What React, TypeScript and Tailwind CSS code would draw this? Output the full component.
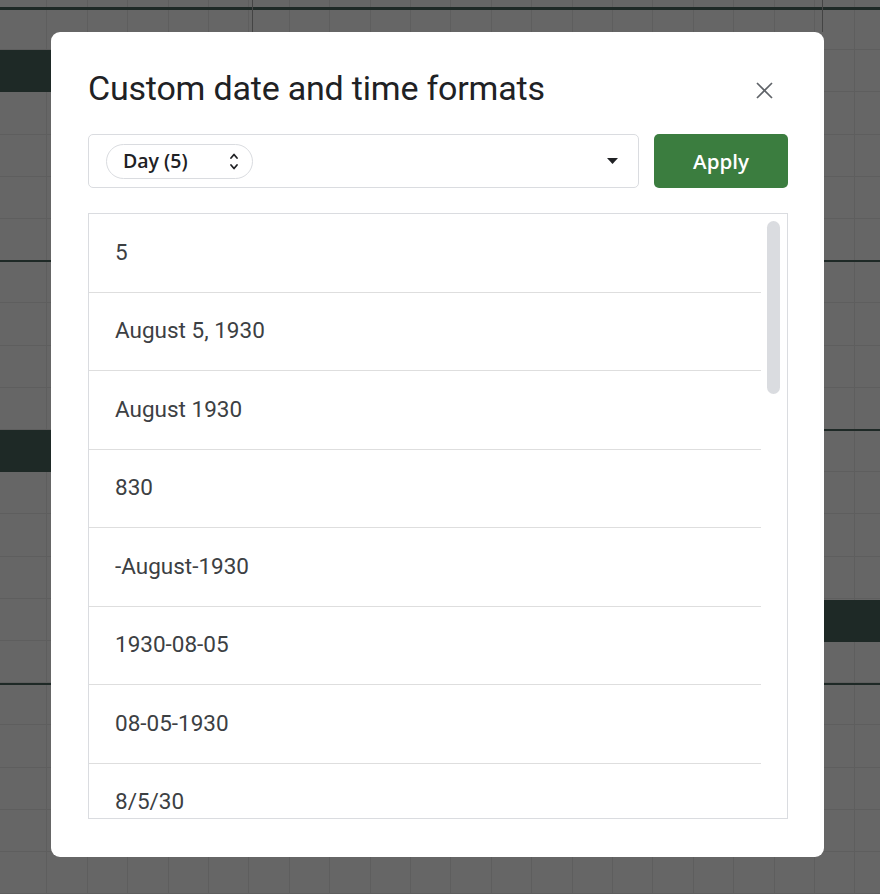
import type { ReactNode } from 'react';

const formats = ['5', 'August 5, 1930', 'August 1930', '830', '-August-1930', '1930-08-05', '08-05-1930', '8/5/30'];

// Spreadsheet behind the dimmed backdrop
function SheetBackdrop() {
  return (
    <div className="absolute inset-0 bg-[#666666] bg-[image:repeating-linear-gradient(to_bottom,transparent_0,transparent_41.2px,#5e5e5e_41.2px,#5e5e5e_42.2px),repeating-linear-gradient(to_right,transparent_0,transparent_39.4px,#5e5e5e_39.4px,#5e5e5e_40.4px)] bg-[position:0_8px,7px_0]">
      <div className="absolute left-0 right-0 top-[7px] h-[3px] bg-[#1e2926]" />
      <div className="absolute left-[252px] top-0 h-[32px] w-px bg-[#444]" />
      <div className="absolute left-[822px] top-0 h-[32px] w-px bg-[#444]" />
      <div className="absolute left-0 top-[50px] h-[42px] w-[52px] bg-[#1e2926]" />
      <div className="absolute left-0 top-[260px] h-[2px] w-[52px] bg-[#1e2926]" />
      <div className="absolute left-0 top-[430px] h-[42px] w-[52px] bg-[#1e2926]" />
      <div className="absolute left-0 top-[683px] h-[2px] w-[52px] bg-[#1e2926]" />
      <div className="absolute right-0 top-[260px] h-[2px] w-[56px] bg-[#1e2926]" />
      <div className="absolute right-0 top-[429px] h-[2px] w-[56px] bg-[#1e2926]" />
      <div className="absolute right-0 top-[600px] h-[42px] w-[56px] bg-[#1e2926]" />
      <div className="absolute right-0 top-[683px] h-[2px] w-[56px] bg-[#1e2926]" />
    </div>
  );
}

function CloseIcon() {
  return (
    <svg width="17" height="17" viewBox="0 0 17 17" fill="none" stroke="#5f6368" strokeWidth="1.7">
      <path d="M1 1L16 16M16 1L1 16" />
    </svg>
  );
}

function UpDownIcon() {
  return (
    <svg width="10" height="19" viewBox="0 0 10 19" fill="none" stroke="#202124" strokeWidth="1.8" strokeLinecap="round" strokeLinejoin="round">
      <path d="M2 6L5 2.5L8 6" />
      <path d="M2 13L5 16.5L8 13" />
    </svg>
  );
}

function Row({ children }: { children: ReactNode }) {
  return (
    <div className="flex h-[78.5px] shrink-0 items-center border-b border-[#dedede] pl-[26px] text-[22.5px] text-[#3c4043] [font-family:Roboto,'Liberation_Sans',sans-serif]">
      {children}
    </div>
  );
}

export default function App() {
  return (
    <div className="relative h-[894px] w-full overflow-hidden">
      <SheetBackdrop />
      <div className="relative ml-[51px] mt-[32px] flex h-[825px] w-[773px] flex-col rounded-[9px] bg-white pb-[38px] pl-[37px] pr-[36px] pt-[28px]">
        <div className="flex h-[60px] items-center justify-between">
          <h1 className="-mt-[4px] text-[34px] font-normal tracking-[-0.2px] text-[#202124] [font-family:Roboto,'Noto_Sans',sans-serif]">
            Custom date and time formats
          </h1>
          <button className="flex h-12 w-12 items-center justify-center">
            <CloseIcon />
          </button>
        </div>

        <div className="mt-[14px] flex h-[54px] gap-[15px]">
          <div className="flex flex-1 items-center justify-between rounded-[5px] border border-[#dadce0] pl-[17px] pr-[20px]">
            <div className="flex h-[35px] w-[147px] items-center justify-between rounded-full border border-[#dadce0] pl-[16px] pr-[13px]">
              <span className="text-[19.5px] font-semibold text-[#202124] [font-family:'Open_Sans',sans-serif]">Day (5)</span>
              <UpDownIcon />
            </div>
            <svg width="11" height="6" viewBox="0 0 11 6">
              <path d="M0 0H11L5.5 6Z" fill="#202124" />
            </svg>
          </div>
          <button className="w-[134px] rounded-[5px] bg-[#3b7d3f] text-[20.5px] font-semibold text-white [font-family:'Open_Sans',sans-serif]">
            Apply
          </button>
        </div>

        <div className="mt-[25px] flex min-h-0 flex-1 overflow-hidden border border-[#dadce0]">
          <div className="flex flex-1 flex-col">
            {formats.map((f) => (
              <Row key={f}>{f}</Row>
            ))}
          </div>
          <div className="w-[26px] shrink-0 pl-[6px] pr-[7px] pt-[7px]">
            <div className="h-[173px] rounded-full bg-[#dadce0]" />
          </div>
        </div>
      </div>
    </div>
  );
}
